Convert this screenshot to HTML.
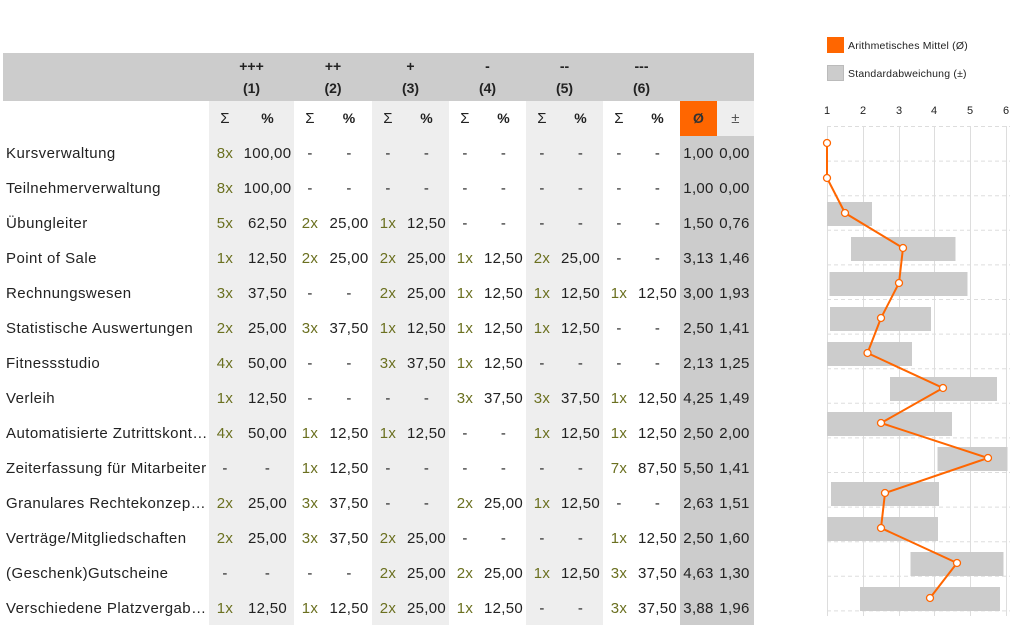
<!DOCTYPE html>
<html><head><meta charset="utf-8"><style>
body{margin:0;width:1024px;height:638px;background:#fff;font-family:"Liberation Sans",sans-serif;color:#222;position:relative;overflow:hidden}
.hd{position:absolute;left:3px;top:53px;width:751px;height:48px;background:#ccc}
.c{position:absolute;text-align:center;font-size:15px;line-height:35px;height:35px;white-space:nowrap;letter-spacing:0.3px}
.n{color:#6b7020}
.b{font-weight:bold;font-size:14px;letter-spacing:0}
.lab{position:absolute;left:6px;font-size:15px;line-height:35px;white-space:nowrap;letter-spacing:0.45px}
.g{position:absolute;background:#eee}
</style></head><body>
<div class="hd"></div>
<div class="g" style="left:209px;top:101px;width:85px;height:524px"></div>
<div class="g" style="left:372px;top:101px;width:77px;height:524px"></div>
<div class="g" style="left:526px;top:101px;width:77px;height:524px"></div>
<div style="position:absolute;left:680px;top:101px;width:37px;height:35px;background:#f60"></div>
<div style="position:absolute;left:717px;top:101px;width:37px;height:35px;background:#eee"></div>
<div style="position:absolute;left:680px;top:136px;width:74px;height:489px;background:#ccc"></div>
<div id="t"></div>
<svg style="position:absolute;left:0;top:0" width="1024" height="638">
<rect x="827" y="37" width="17" height="16" fill="#f60"/>
<text x="848" y="49" font-size="10.5" letter-spacing="0.2" font-family="Liberation Sans" fill="#222">Arithmetisches Mittel (Ø)</text>
<rect x="827.5" y="65.5" width="16" height="15" fill="#ccc" stroke="#bbb"/>
<text x="848" y="77" font-size="10.5" letter-spacing="0.2" font-family="Liberation Sans" fill="#222">Standardabweichung (±)</text>
<g font-size="11" font-family="Liberation Sans" fill="#222" text-anchor="middle">
<text x="827" y="114">1</text><text x="863" y="114">2</text><text x="899" y="114">3</text><text x="934" y="114">4</text><text x="970" y="114">5</text><text x="1006" y="114">6</text></g>
<g stroke="#ddd" stroke-width="1">
<line x1="827.5" y1="126" x2="827.5" y2="616"/><line x1="863.5" y1="126" x2="863.5" y2="616"/><line x1="899.5" y1="126" x2="899.5" y2="616"/><line x1="934.5" y1="126" x2="934.5" y2="616"/><line x1="970.5" y1="126" x2="970.5" y2="616"/><line x1="1006.5" y1="126" x2="1006.5" y2="616"/>
</g>
<g stroke="#ddd" stroke-dasharray="4,3" id="hl"></g>
<g fill="#ccc">
<rect x="827" y="202" width="45" height="24"/>
<rect x="851" y="237" width="104.5" height="24"/>
<rect x="829.5" y="272" width="138" height="24"/>
<rect x="830" y="307" width="101" height="24"/>
<rect x="827" y="342" width="85" height="24"/>
<rect x="890" y="377" width="107" height="24"/>
<rect x="827" y="412" width="125" height="24"/>
<rect x="937.5" y="447" width="70" height="24"/>
<rect x="831" y="482" width="108" height="24"/>
<rect x="827" y="517" width="111" height="24"/>
<rect x="910.5" y="552" width="93" height="24"/>
<rect x="860" y="587" width="140" height="24"/>
</g>
<polyline fill="none" stroke="#f60" stroke-width="2" points="827,143 827,178 845,213 903,248 899,283 881,318 867.5,353 943,388 881,423 988,458 885,493 881,528 957,563 930,598"/>
<g fill="#fff" stroke="#f60" stroke-width="1.3">
<circle cx="827" cy="143" r="3.5"/><circle cx="827" cy="178" r="3.5"/><circle cx="845" cy="213" r="3.5"/><circle cx="903" cy="248" r="3.5"/><circle cx="899" cy="283" r="3.5"/><circle cx="881" cy="318" r="3.5"/><circle cx="867.5" cy="353" r="3.5"/><circle cx="943" cy="388" r="3.5"/><circle cx="881" cy="423" r="3.5"/><circle cx="988" cy="458" r="3.5"/><circle cx="885" cy="493" r="3.5"/><circle cx="881" cy="528" r="3.5"/><circle cx="957" cy="563" r="3.5"/><circle cx="930" cy="598" r="3.5"/>
</g>
</svg>
<script>
var cols=[[209,32],[241,53],[294,32],[326,46],[372,32],[404,45],[449,32],[481,45],[526,32],[558,45],[603,32],[635,45]];
var rows=[
["Kursverwaltung","8x","100,00","-","-","-","-","-","-","-","-","-","-","1,00","0,00"],
["Teilnehmerverwaltung","8x","100,00","-","-","-","-","-","-","-","-","-","-","1,00","0,00"],
["Übungleiter","5x","62,50","2x","25,00","1x","12,50","-","-","-","-","-","-","1,50","0,76"],
["Point of Sale","1x","12,50","2x","25,00","2x","25,00","1x","12,50","2x","25,00","-","-","3,13","1,46"],
["Rechnungswesen","3x","37,50","-","-","2x","25,00","1x","12,50","1x","12,50","1x","12,50","3,00","1,93"],
["Statistische Auswertungen","2x","25,00","3x","37,50","1x","12,50","1x","12,50","1x","12,50","-","-","2,50","1,41"],
["Fitnessstudio","4x","50,00","-","-","3x","37,50","1x","12,50","-","-","-","-","2,13","1,25"],
["Verleih","1x","12,50","-","-","-","-","3x","37,50","3x","37,50","1x","12,50","4,25","1,49"],
["Automatisierte Zutrittskont…","4x","50,00","1x","12,50","1x","12,50","-","-","1x","12,50","1x","12,50","2,50","2,00"],
["Zeiterfassung für Mitarbeiter","-","-","1x","12,50","-","-","-","-","-","-","7x","87,50","5,50","1,41"],
["Granulares Rechtekonzep…","2x","25,00","3x","37,50","-","-","2x","25,00","1x","12,50","-","-","2,63","1,51"],
["Verträge/Mitgliedschaften","2x","25,00","3x","37,50","2x","25,00","-","-","-","-","1x","12,50","2,50","1,60"],
["(Geschenk)Gutscheine","-","-","-","-","2x","25,00","2x","25,00","1x","12,50","3x","37,50","4,63","1,30"],
["Verschiedene Platzvergab…","1x","12,50","1x","12,50","2x","25,00","1x","12,50","-","-","3x","37,50","3,88","1,96"]];
var h="";
var heads=["+++","++","+","-","--","---"];
for(var g=0;g<6;g++){var x=cols[2*g][0],w=cols[2*g][1]+cols[2*g+1][1];
h+='<div class="c b" style="left:'+x+'px;width:'+w+'px;top:54px;line-height:24px;height:24px">'+heads[g]+'</div>';
h+='<div class="c b" style="left:'+x+'px;width:'+w+'px;top:76px;line-height:24px;height:24px">('+(g+1)+')</div>';
h+='<div class="c" style="left:'+cols[2*g][0]+'px;width:'+cols[2*g][1]+'px;top:101px">Σ</div>';
h+='<div class="c b" style="left:'+cols[2*g+1][0]+'px;width:'+cols[2*g+1][1]+'px;top:101px">%</div>';}
h+='<div class="c b" style="left:680px;width:37px;top:101px;color:#333">Ø</div>';
h+='<div class="c" style="left:717px;width:37px;top:101px;color:#555">±</div>';
for(var r=0;r<rows.length;r++){var y=136+35*r,R=rows[r];
h+='<div class="lab" style="top:'+y+'px">'+R[0]+'</div>';
for(var k=0;k<12;k++){var v=R[k+1];var cl=(k%2==0&&v!="-")?"c n":"c";
h+='<div class="'+cl+'" style="left:'+cols[k][0]+'px;width:'+cols[k][1]+'px;top:'+y+'px">'+v+'</div>';}
h+='<div class="c" style="left:680px;width:37px;top:'+y+'px">'+R[13]+'</div>';
h+='<div class="c" style="left:716px;width:37px;top:'+y+'px">'+R[14]+'</div>';}
document.getElementById("t").innerHTML=h;
var l="";for(var i=0;i<15;i++){var yy=126.5+34.6*i;l+='<line x1="827" y1="'+yy+'" x2="1010" y2="'+yy+'"/>';}
document.getElementById("hl").innerHTML=l;
</script>
</body></html>
